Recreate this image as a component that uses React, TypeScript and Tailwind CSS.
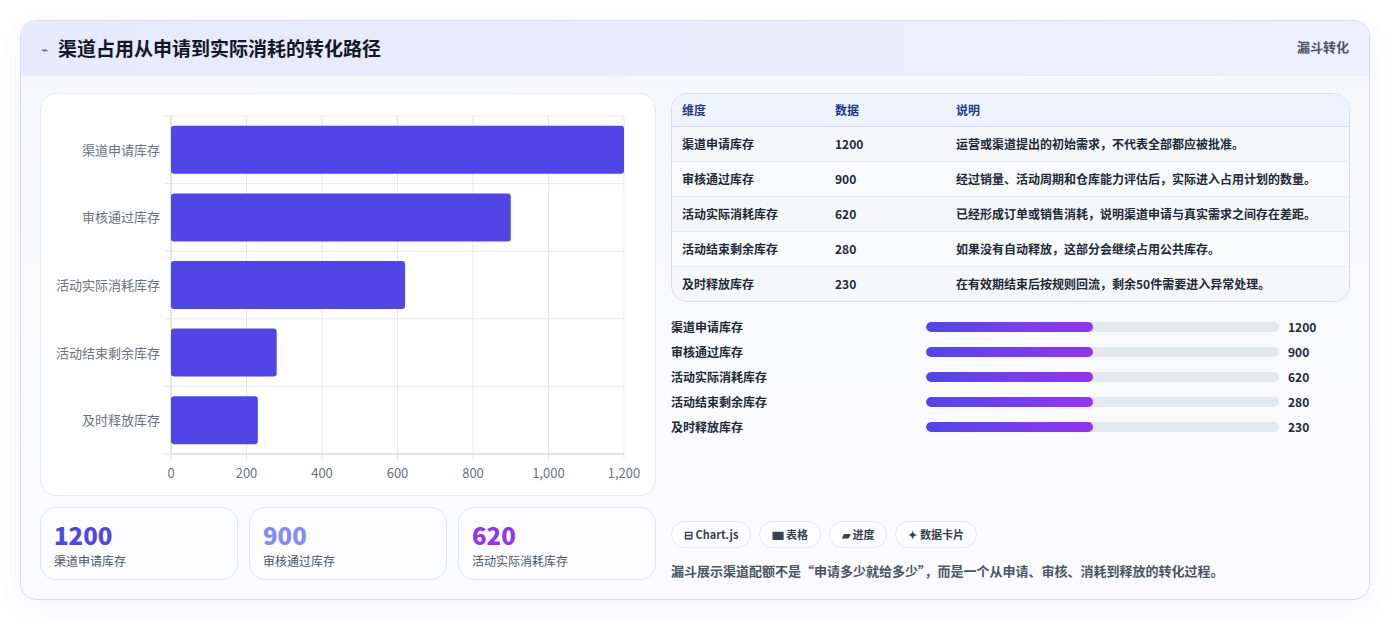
import React from 'react';

const rows = [
  { name: '渠道申请库存', value: 1200, note: '运营或渠道提出的初始需求，不代表全部都应被批准。' },
  { name: '审核通过库存', value: 900, note: '经过销量、活动周期和仓库能力评估后，实际进入占用计划的数量。' },
  { name: '活动实际消耗库存', value: 620, note: '已经形成订单或销售消耗，说明渠道申请与真实需求之间存在差距。' },
  { name: '活动结束剩余库存', value: 280, note: '如果没有自动释放，这部分会继续占用公共库存。' },
  { name: '及时释放库存', value: 230, note: '在有效期结束后按规则回流，剩余50件需要进入异常处理。' },
];

const font = { fontFamily: '"Noto Sans CJK SC", "Noto Sans", sans-serif' };

function Chart() {
  const x0 = 130;
  const w = 453;
  const y0 = 22;
  const rowH = 67.6;
  const ticks = [0, 200, 400, 600, 800, 1000, 1200];
  return (
    <svg width="615" height="401" className="block">
      {ticks.map((t) => {
        const x = x0 + (t / 1200) * w;
        return (
          <g key={t}>
            <line x1={x} y1={y0} x2={x} y2={y0 + rowH * 5 + 6} stroke="#e5e7eb" />
            <text x={x} y={384} textAnchor="middle" fontSize="13" fill="#6b7280">
              {t.toLocaleString('en-US')}
            </text>
          </g>
        );
      })}
      {[0, 1, 2, 3, 4, 5].map((i) => (
        <line key={i} x1={x0 - 6} y1={y0 + rowH * i} x2={x0 + w} y2={y0 + rowH * i} stroke="#e5e7eb" />
      ))}
      <line x1={x0} y1={y0} x2={x0} y2={y0 + rowH * 5} stroke="#d1d5db" />
      <line x1={x0} y1={y0 + rowH * 5} x2={x0 + w} y2={y0 + rowH * 5} stroke="#d1d5db" />
      {rows.map((r, i) => {
        const cy = y0 + rowH * i + rowH / 2;
        return (
          <g key={r.name}>
            <rect x={x0} y={cy - 24} width={(r.value / 1200) * w} height={48} rx={3} fill="#4f46e5" />
            <text x={x0 - 11} y={cy + 5} textAnchor="end" fontSize="13" fill="#6b7280">
              {r.name}
            </text>
          </g>
        );
      })}
    </svg>
  );
}

export default function App() {
  const stats = [
    { v: '1200', l: '渠道申请库存', c: 'text-[#4f46e5]' },
    { v: '900', l: '审核通过库存', c: 'text-[#818cf8]' },
    { v: '620', l: '活动实际消耗库存', c: 'text-[#9333ea]' },
  ];
  return (
    <div className="w-[1390px] h-[621px] bg-white pt-5 px-5" style={font}>
      <div className="w-[1350px] h-[580px] rounded-2xl border border-[#d6dbf5] bg-gradient-to-b from-[#f6f7fe] to-[#fbfbff] shadow-[0_8px_24px_rgba(99,102,241,0.08)] overflow-hidden">
        <div className="h-[55px] bg-gradient-to-r from-[#e7e9fd] to-[#eef0fd] flex items-center justify-between pl-[20px] pr-5">
          <div className="flex items-center gap-2.5">
            <span className="text-[#3b5bdb] text-xs">⌁</span>
            <h1 className="text-[19px] font-bold text-[#111827]">渠道占用从申请到实际消耗的转化路径</h1>
          </div>
          <span className="text-[13px] font-bold text-[#4b5563] self-start mt-[16px]">漏斗转化</span>
        </div>
        <div className="flex gap-[15px] px-[19px] pt-[17px]">
          <div className="w-[616px] flex flex-col gap-[11px]">
            <div className="h-[403px] bg-white rounded-2xl border border-[#e5e9f5]">
              <Chart />
            </div>
            <div className="grid grid-cols-3 gap-[11px]">
              {stats.map((s) => (
                <div key={s.v} className="h-[73px] rounded-2xl border border-[#dbe4f7] bg-white/60 px-[13px] pt-[11px]">
                  <div className={`text-[24px] font-extrabold leading-8 ${s.c}`}>{s.v}</div>
                  <div className="text-xs text-[#4b5563] mt-0.5">{s.l}</div>
                </div>
              ))}
            </div>
          </div>
          <div className="flex-1 flex flex-col">
            <div className="rounded-2xl border border-[#d6dcef] overflow-hidden bg-white">
              <table className="w-full text-xs text-[#1f2937]">
                <thead>
                  <tr className="bg-[#eef4ff] text-[#1e3a8a] h-[32px] border-b border-[#d6dcef]">
                    <th className="text-left font-bold pl-[10px] w-[163px]">维度</th>
                    <th className="text-left font-bold w-[121px]">数据</th>
                    <th className="text-left font-bold">说明</th>
                  </tr>
                </thead>
                <tbody>
                  {rows.map((r, i) => (
                    <tr key={r.name} className={`h-[35px] ${i < 4 ? 'border-b border-[#e8ecf4]' : ''} ${i % 2 ? 'bg-[#f8fafc]' : 'bg-[#f5f7fb]'}`}>
                      <td className="pl-[10px] font-semibold">{r.name}</td>
                      <td className="font-semibold">{r.value}</td>
                      <td className="font-semibold">{r.note}</td>
                    </tr>
                  ))}
                </tbody>
              </table>
            </div>
            <div className="mt-[12px] flex flex-col">
              {rows.map((r) => (
                <div key={r.name} className="h-[25px] flex items-center text-xs font-semibold text-[#1f2937]">
                  <span className="w-[255px]">{r.name}</span>
                  <div className="w-[353px] h-[10px] rounded-full bg-[#e2e8f0] overflow-hidden">
                    <div className="h-full w-[167px] rounded-full bg-gradient-to-r from-[#4f46e5] to-[#9333ea]" />
                  </div>
                  <span className="ml-[9px] font-bold">{r.value}</span>
                </div>
              ))}
            </div>
            <div className="mt-auto">
              <div className="flex gap-2 text-[11px] font-bold text-[#374151]">
                <span className="h-[27px] px-3 rounded-full border border-[#e5e7eb] bg-white/70 flex items-center">⊟ Chart.js</span>
                <span className="h-[27px] px-3 rounded-full border border-[#e5e7eb] bg-white/70 flex items-center">▆ 表格</span>
                <span className="h-[27px] px-3 rounded-full border border-[#e5e7eb] bg-white/70 flex items-center">▰ 进度</span>
                <span className="h-[27px] px-3 rounded-full border border-[#e5e7eb] bg-white/70 flex items-center">✦ 数据卡片</span>
              </div>
              <p className="mt-[13px] text-[13px] font-semibold text-[#4b5563]">漏斗展示渠道配额不是“申请多少就给多少”，而是一个从申请、审核、消耗到释放的转化过程。</p>
            </div>
          </div>
        </div>
      </div>
    </div>
  );
}
